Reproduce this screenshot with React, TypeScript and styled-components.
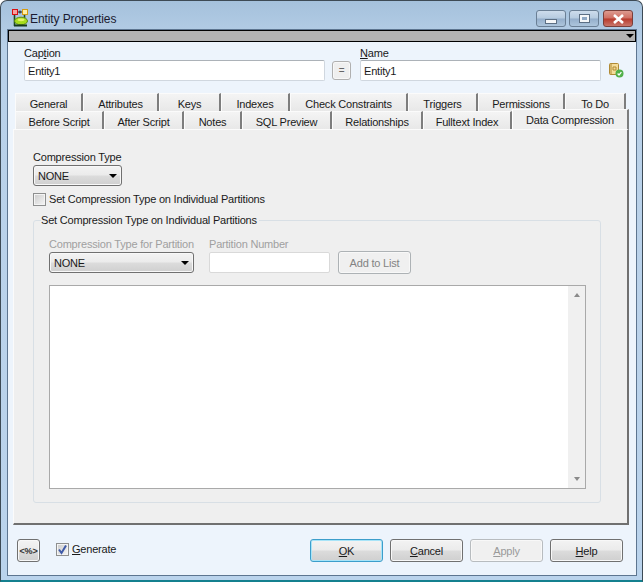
import React from 'react';
import styled, { createGlobalStyle, css } from 'styled-components';

const GlobalStyle = createGlobalStyle`
    html, body { margin: 0; padding: 0; background: #fff; }
    body { font-family: 'Liberation Sans', Arial, sans-serif; font-size: 11px; letter-spacing: -0.2px; color: #1a1a1a; }
`;

const BACK_TABS = [
    { label: 'General', width: 68 },
    { label: 'Attributes', width: 76 },
    { label: 'Keys', width: 62 },
    { label: 'Indexes', width: 69 },
    { label: 'Check Constraints', width: 118 },
    { label: 'Triggers', width: 70 },
    { label: 'Permissions', width: 87 },
    { label: 'To Do', width: 61 },
];

const FRONT_TABS = [
    { label: 'Before Script', width: 89 },
    { label: 'After Script', width: 80 },
    { label: 'Notes', width: 58 },
    { label: 'SQL Preview', width: 90 },
    { label: 'Relationships', width: 91 },
    { label: 'Fulltext Index', width: 89 },
];

const TitleIcon = () => (
    <svg width="17" height="18" viewBox="0 0 17 18">
        <rect x="1.5" y="0.5" width="5" height="5" fill="#f7a0a0" stroke="#d81010" />
        <rect x="11.5" y="0.5" width="5" height="5" fill="#fff0a8" stroke="#d69a10" />
        <path d="M7 3h4M9 1.5v3" stroke="#222" fill="none" />
        <path d="M3.5 6v11" stroke="#1f4d24" strokeWidth="1.6" fill="none" />
        <path d="M13.5 6v3" stroke="#1f4d24" strokeWidth="1.6" fill="none" />
        <ellipse cx="10" cy="12" rx="6.5" ry="3.8" fill="#a6dc1e" stroke="#5d8a14" />
        <ellipse cx="10" cy="10.8" rx="3.5" ry="1.4" fill="#e4f26a" />
        <path d="M3 16.5h13" stroke="#173a1c" strokeWidth="1.8" fill="none" />
    </svg>
);

const ValidateIcon = () => (
    <svg width="16" height="16" viewBox="0 0 16 16">
        <rect x="1.5" y="1.5" width="9" height="11" rx="1" fill="#f4dc9a" stroke="#b08a35" />
        <path d="M3 1v12M5 5h3v3H5z" stroke="#b08a35" fill="none" />
        <circle cx="11.5" cy="11.5" r="4" fill="#52b04a" />
        <path d="M9.6 11.5l1.4 1.5 2.4-2.8" stroke="#fff" strokeWidth="1.2" fill="none" />
    </svg>
);

const App: React.FC = () => {
    return (
        <Window>
            <GlobalStyle />
            <TitleBar>
                <TitleIcon />
                <TitleText>Entity Properties</TitleText>
                <Controls>
                    <Control>
                        <MinGlyph />
                    </Control>
                    <Control>
                        <MaxGlyph />
                    </Control>
                    <Control $close>
                        <svg width="15" height="10" viewBox="0 0 15 10">
                            <path d="M3 1l9 8M12 1l-9 8" stroke="#fff" strokeWidth="2.6" fill="none" />
                        </svg>
                    </Control>
                </Controls>
            </TitleBar>
            <Client>
                <GrayBar>
                    <Arrow />
                </GrayBar>
                <Content>
                    <HeaderRow>
                        <Field $width={301}>
                            <FieldLabel>
                                Cap<u>t</u>ion
                            </FieldLabel>
                            <TextBox readOnly value="Entity1" />
                        </Field>
                        <EqualsButton>=</EqualsButton>
                        <Field $width={241}>
                            <FieldLabel>
                                <u>N</u>ame
                            </FieldLabel>
                            <TextBox readOnly value="Entity1" />
                        </Field>
                        <ValidateSlot>
                            <ValidateIcon />
                        </ValidateSlot>
                    </HeaderRow>
                    <Tabs>
                        <TabRow>
                            {BACK_TABS.map(tab => (
                                <Tab key={tab.label} $width={tab.width}>
                                    {tab.label}
                                </Tab>
                            ))}
                        </TabRow>
                        <TabRow>
                            {FRONT_TABS.map(tab => (
                                <Tab key={tab.label} $width={tab.width}>
                                    {tab.label}
                                </Tab>
                            ))}
                            <ActiveTab>Data Compression</ActiveTab>
                        </TabRow>
                        <Panel>
                            <Label>Compression Type</Label>
                            <Select $width={89}>
                                NONE
                                <Arrow />
                            </Select>
                            <CheckRow>
                                <CheckBox />
                                Set Compression Type on Individual Partitions
                            </CheckRow>
                            <GroupBox>
                                <Legend>Set Compression Type on Individual Partitions</Legend>
                                <PartitionRow>
                                    <Field $width={145}>
                                        <Label $disabled>Compression Type for Partition</Label>
                                        <Select $width={145}>
                                            NONE
                                            <Arrow />
                                        </Select>
                                    </Field>
                                    <Field $width={121}>
                                        <Label $disabled>Partition Number</Label>
                                        <DisabledInput />
                                    </Field>
                                    <AddButton>Add to List</AddButton>
                                </PartitionRow>
                                <ListBox>
                                    <ScrollBar>
                                        <ScrollArrow />
                                        <ScrollArrow $down />
                                    </ScrollBar>
                                </ListBox>
                            </GroupBox>
                        </Panel>
                    </Tabs>
                    <Footer>
                        <CodeButton>&lt;%&gt;</CodeButton>
                        <GenerateRow>
                            <CheckBox $checked>
                                <svg width="11" height="11" viewBox="0 0 11 11">
                                    <path d="M2 5.5l2.5 3.5L9 1.5" stroke="#3f5aa8" strokeWidth="2" fill="none" />
                                </svg>
                            </CheckBox>
                            <span>
                                <u>G</u>enerate
                            </span>
                        </GenerateRow>
                        <DialogButtons>
                            <DialogButton $default>
                                <u>O</u>K
                            </DialogButton>
                            <DialogButton>
                                <u>C</u>ancel
                            </DialogButton>
                            <DialogButton disabled>
                                <u>A</u>pply
                            </DialogButton>
                            <DialogButton>
                                <u>H</u>elp
                            </DialogButton>
                        </DialogButtons>
                    </Footer>
                </Content>
            </Client>
        </Window>
    );
};

const buttonFace = css`
    background: linear-gradient(#f3f3f3 0%, #ebebeb 48%, #dcdcdc 52%, #cfcfcf 100%);
    border: 1px solid #707070;
    border-radius: 3px;
    box-shadow: inset 0 0 0 1px #f8f8f8;
    font: inherit;
    letter-spacing: inherit;
    color: inherit;
    padding: 0;
    box-sizing: border-box;
`;

const Window = styled.div`
    width: 643px;
    height: 582px;
    box-sizing: border-box;
    display: flex;
    flex-direction: column;
    border: 1px solid #3d4a55;
    border-bottom: 2px solid #14808f;
    border-radius: 7px 7px 0 0;
    background: linear-gradient(#a5c1dc 0%, #b9d1e9 8%, #bad3ec 100%);
    overflow: hidden;
`;

const TitleBar = styled.div`
    height: 29px;
    flex: none;
    display: flex;
    align-items: flex-start;
    padding: 8px 9px 0 10px;
    box-sizing: border-box;
`;

const TitleText = styled.div`
    font-size: 12px;
    letter-spacing: -0.1px;
    margin: 3px 0 0 2px;
    color: #1b1b30;
`;

const Controls = styled.div`
    margin-left: auto;
    display: flex;
    margin-top: 1px;
    gap: 3px;
`;

const Control = styled.div<{ $close?: boolean }>`
    width: 30px;
    height: 17px;
    margin-left: ${props => (props.$close ? 1 : 0)}px;
    box-sizing: border-box;
    display: flex;
    align-items: center;
    justify-content: center;
    border: 1px solid ${props => (props.$close ? '#7a3f3a' : '#6a7f95')};
    border-radius: 3px;
    background: ${props =>
        props.$close
            ? 'linear-gradient(#dd9a8f 0%, #cf6f63 48%, #b83a2c 52%, #c9766a 100%)'
            : 'linear-gradient(#cddcec 0%, #b6cbe0 48%, #94aecb 52%, #adc5dc 100%)'};
`;

const MinGlyph = styled.div`
    width: 10px;
    height: 3px;
    margin-top: 5px;
    background: #f4f6f8;
    border: 1px solid #5c6f84;
`;

const MaxGlyph = styled.div`
    width: 5px;
    height: 3px;
    background: #8fa8c4;
    border: 2px solid #f4f6f8;
    outline: 1px solid #5c6f84;
`;

const Client = styled.div`
    flex: 1;
    min-height: 0;
    display: flex;
    flex-direction: column;
    margin: 0 6px 5px 7px;
    outline: 1px solid #5d7590;
`;

const GrayBar = styled.div`
    height: 12px;
    flex: none;
    box-sizing: border-box;
    background: #b2b2b2;
    border: 1px solid #000;
    display: flex;
    align-items: center;
    justify-content: flex-end;
    padding-right: 1px;
`;

const Arrow = styled.span`
    width: 0;
    height: 0;
    border-style: solid;
    border-width: 4px 4px 0;
    border-color: #000 transparent transparent;
`;

const Content = styled.div`
    flex: 1;
    min-height: 0;
    display: flex;
    flex-direction: column;
    padding: 0 5px 0 5px;
    background: #edf4fc;
`;

const HeaderRow = styled.div`
    display: flex;
    align-items: flex-end;
    height: 39px;
    padding-left: 11px;
`;

const Field = styled.label<{ $width: number }>`
    display: flex;
    flex-direction: column;
    width: ${props => props.$width}px;
`;

const FieldLabel = styled.div`
    line-height: 14px;
`;

const TextBox = styled.input`
    height: 21px;
    width: 100%;
    box-sizing: border-box;
    border: 1px solid #d0d7df;
    border-top-color: #acb2b8;
    border-radius: 2px;
    background: #fff;
    font: inherit;
    letter-spacing: inherit;
    color: inherit;
    padding: 0 3px;
    outline: none;
`;

const EqualsButton = styled.button`
    ${buttonFace}
    width: 19px;
    height: 19px;
    margin: 0 9px 1px 7px;
    border-color: #b0b0b0;
    background: #efefef;
    color: #666;
    font-size: 10px;
`;

const ValidateSlot = styled.div`
    margin: 0 0 1px 7px;
    height: 18px;
`;

const Tabs = styled.div`
    flex: none;
    margin-top: 12px;
    display: flex;
    flex-direction: column;
`;

const TabRow = styled.div`
    display: flex;
    align-items: flex-end;
    height: 18px;
    padding-left: 2px;
`;

const Tab = styled.div<{ $width: number }>`
    width: ${props => props.$width}px;
    height: 18px;
    box-sizing: border-box;
    display: flex;
    align-items: center;
    justify-content: center;
    padding-top: 2px;
    background: linear-gradient(#f4f4f4, #e8e8e8);
    border-top: 1px solid #fbfbfb;
    border-left: 1px solid #fbfbfb;
    border-right: 2px solid #7d7d7d;
`;

const ActiveTab = styled.div`
    width: 117px;
    height: 20px;
    margin-top: -2px;
    box-sizing: border-box;
    display: flex;
    align-items: center;
    justify-content: center;
    background: #efefef;
    border-top: 1px solid #fbfbfb;
    border-left: 1px solid #fff;
    border-right: 2px solid #7d7d7d;
    position: relative;
    z-index: 1;
`;

const Panel = styled.div`
    width: 616px;
    height: 396px;
    box-sizing: border-box;
    background: #efefef;
    border-right: 2px solid #707070;
    border-bottom: 2px solid #707070;
    border-left: 1px solid #fbfbfb;
    border-top: 1px solid #fbfbfb;
    padding: 20px 27px 0 19px;
    display: flex;
    flex-direction: column;
    align-items: flex-start;
`;

const Label = styled.div<{ $disabled?: boolean }>`
    line-height: 14px;
    margin-bottom: 1px;
    color: ${props => (props.$disabled ? '#a0a0a0' : 'inherit')};
`;

const Select = styled.div<{ $width: number }>`
    ${buttonFace}
    width: ${props => props.$width}px;
    height: 21px;
    flex: none;
    display: flex;
    align-items: center;
    justify-content: space-between;
    padding: 0 4px;
`;

const CheckRow = styled.div`
    display: flex;
    align-items: center;
    gap: 3px;
    margin-top: 6px;
    line-height: 14px;
`;

const CheckBox = styled.span<{ $checked?: boolean }>`
    width: 13px;
    height: 13px;
    box-sizing: border-box;
    flex: none;
    display: flex;
    align-items: center;
    justify-content: center;
    border: 1px solid #8e8f8f;
    box-shadow: inset 0 0 0 1px #f4f4f4;
    background: linear-gradient(135deg, #cbcbcb, #f6f6f6);
`;

const GroupBox = styled.fieldset`
    width: 568px;
    height: 290px;
    margin: 7px 0 0 0;
    padding: 0 14px 0 15px;
    box-sizing: border-box;
    border: 1px solid #d8dfe5;
    border-radius: 3px;
    min-width: 0;
`;

const Legend = styled.legend`
    padding: 0 2px 0 0;
    margin-left: -8px;
    line-height: 14px;
`;

const PartitionRow = styled.div`
    display: flex;
    align-items: flex-end;
    gap: 15px;
    margin-top: 10px;
`;

const DisabledInput = styled.div`
    height: 21px;
    box-sizing: border-box;
    background: #fff;
    border: 1px solid #d9d9d9;
    border-radius: 2px;
`;

const AddButton = styled.button`
    ${buttonFace}
    width: 73px;
    height: 23px;
    margin: 0 0 -1px -7px;
    background: #f0f0f0;
    border-color: #adb2b5;
    color: #838383;
`;

const ListBox = styled.div`
    width: 537px;
    height: 204px;
    margin-top: 12px;
    box-sizing: border-box;
    border: 1px solid #a9a9a9;
    background: #fff;
    display: flex;
    justify-content: flex-end;
`;

const ScrollBar = styled.div`
    width: 17px;
    background: #f0f0f0;
    display: flex;
    flex-direction: column;
    justify-content: space-between;
    align-items: center;
    padding: 7px 0;
`;

const ScrollArrow = styled.span<{ $down?: boolean }>`
    width: 0;
    height: 0;
    border-style: solid;
    border-width: ${props => (props.$down ? '4px 3.5px 0' : '0 3.5px 4px')};
    border-color: ${props => (props.$down ? '#8a8a8a transparent transparent' : 'transparent transparent #8a8a8a')};
`;

const Footer = styled.div`
    flex: 1;
    display: flex;
    align-items: flex-start;
    padding: 14px 8px 0 4px;
`;

const CodeButton = styled.button`
    ${buttonFace}
    width: 23px;
    height: 23px;
    font-size: 9px;
    font-weight: bold;
    color: #333;
`;

const GenerateRow = styled.div`
    display: flex;
    align-items: center;
    gap: 3px;
    margin: 3px 0 0 16px;
    line-height: 14px;
`;

const DialogButtons = styled.div`
    margin-left: auto;
    display: flex;
    gap: 7px;
`;

const DialogButton = styled.button<{ $default?: boolean }>`
    ${buttonFace}
    width: 73px;
    height: 23px;
    ${props =>
        props.$default &&
        css`
            border-color: #3c9ecb;
            box-shadow: inset 0 0 0 1px #a8e4f8;
        `}
    &:disabled {
        background: #f0f0f0;
        border-color: #b8bcbf;
        color: #9a9a9a;
    }
`;

export default App;
